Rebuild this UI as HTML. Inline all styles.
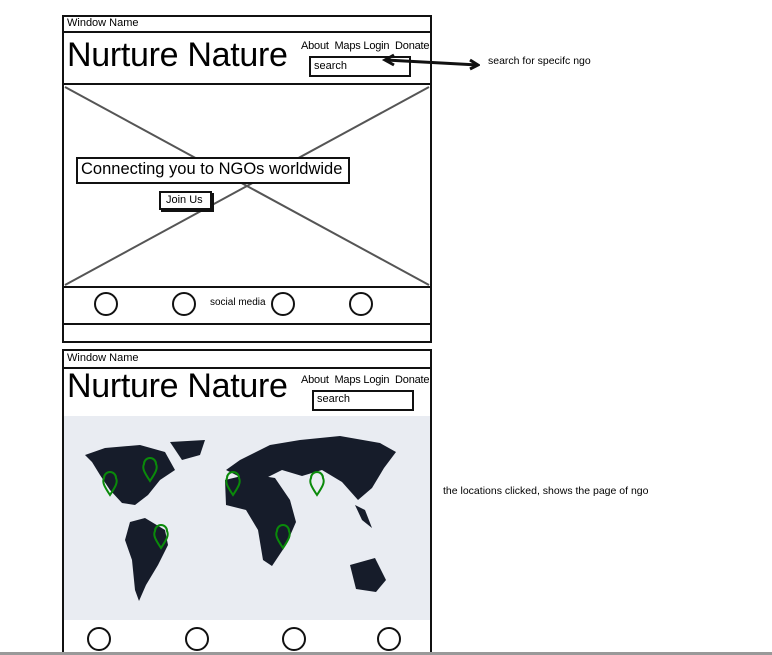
<!DOCTYPE html>
<html style="height:655px;overflow:hidden"><head><style>
body{margin:0;width:772px;height:655px;background:#fff;position:relative;overflow:hidden;font-family:"Liberation Sans",sans-serif;color:#000}
.a{position:absolute}
.box{position:absolute;border:2px solid #111;box-sizing:border-box}
.t{position:absolute;white-space:nowrap}
.c{position:absolute;width:24px;height:24px;border:2px solid #111;border-radius:50%;box-sizing:border-box;background:#fff}
</style></head><body>
<!-- frame 1 -->
<div class="box" style="left:62px;top:15px;width:370px;height:328px"></div>
<div class="a" style="left:62px;top:31px;width:370px;height:2px;background:#111"></div>
<div class="t" style="left:67px;top:17px;font-size:11px">Window Name</div>
<div class="a" style="left:62px;top:83px;width:370px;height:2px;background:#111"></div>
<div class="t" style="left:67px;top:36px;font-size:34px;letter-spacing:-0.3px">Nurture Nature</div>
<div class="t" style="left:301px;top:40px;font-size:11px;letter-spacing:-0.2px">About&nbsp; Maps Login&nbsp; Donate</div>
<div class="box" style="left:309px;top:56px;width:102px;height:21px;border-width:2px"></div>
<div class="t" style="left:314px;top:60px;font-size:11px">search</div>
<svg class="a" style="left:62px;top:84px" width="370" height="204"><line x1="3" y1="3" x2="367" y2="201" stroke="#555" stroke-width="2"/><line x1="367" y1="3" x2="3" y2="201" stroke="#555" stroke-width="2"/></svg>
<div class="box" style="left:76px;top:157px;width:274px;height:27px;background:#fff"></div>
<div class="t" style="left:81px;top:160px;font-size:16.5px">Connecting you to NGOs worldwide</div>
<div class="box" style="left:159px;top:191px;width:53px;height:19px;background:#fff;box-shadow:2px 2px 0 #111"></div>
<div class="t" style="left:166px;top:194px;font-size:11px">Join Us</div>
<div class="a" style="left:62px;top:286px;width:370px;height:2px;background:#111"></div>
<div class="t" style="left:210px;top:297px;font-size:10px">social media</div>
<div class="c" style="left:94px;top:292px"></div>
<div class="c" style="left:172px;top:292px"></div>
<div class="c" style="left:271px;top:292px"></div>
<div class="c" style="left:349px;top:292px"></div>
<div class="a" style="left:62px;top:323px;width:370px;height:2px;background:#111"></div>
<!-- arrow -->
<svg class="a" style="left:380px;top:52px" width="100" height="20"><line x1="6" y1="8" x2="98" y2="13" stroke="#111" stroke-width="3"/><polyline points="14,3 5,8 14,13" fill="none" stroke="#111" stroke-width="3"/><polyline points="90,8 98,13 90,17" fill="none" stroke="#111" stroke-width="3"/></svg>
<div class="t" style="left:488px;top:55px;font-size:10.5px">search for specifc ngo</div>
<!-- frame 2 -->
<div class="box" style="left:62px;top:349px;width:370px;height:310px"></div>
<div class="a" style="left:62px;top:367px;width:370px;height:2px;background:#111"></div>
<div class="t" style="left:67px;top:352px;font-size:11px">Window Name</div>
<div class="t" style="left:67px;top:367px;font-size:34px;letter-spacing:-0.3px">Nurture Nature</div>
<div class="t" style="left:301px;top:374px;font-size:11px;letter-spacing:-0.2px">About&nbsp; Maps Login&nbsp; Donate</div>
<div class="box" style="left:312px;top:390px;width:102px;height:21px"></div>
<div class="t" style="left:317px;top:393px;font-size:11px">search</div>
<svg class="a" style="left:64px;top:416px" width="366" height="204" viewBox="64 416 366 204">
<rect x="64" y="416" width="366" height="204" fill="#e9ecf2"/>
<g fill="#161c2a">
<polygon points="85,455 105,448 140,445 165,452 175,470 160,480 148,495 135,505 122,503 110,490 100,475 92,462"/>
<polygon points="170,442 205,440 200,455 182,460"/>
<polygon points="130,522 145,518 165,530 168,545 158,565 146,585 139,601 135,590 132,560 125,540"/>
<polygon points="250,455 270,445 300,440 340,436 380,443 396,452 384,468 372,488 358,500 342,482 322,470 302,476 282,470 262,480 242,478 226,470 240,460"/>
<polygon points="225,480 250,474 275,478 290,500 296,522 286,545 272,566 263,560 258,530 246,510 226,505"/>
<polygon points="350,565 375,558 386,580 376,592 356,589"/>
<polygon points="355,505 365,510 372,528 362,520"/>
</g>
<g fill="none" stroke="#0a8a0a" stroke-width="2">
<path d="M110 495 C104 486 102 482 104 478 A6 6 0 0 1 116 478 C118 482 116 486 110 495Z"/>
<path d="M150 481 C144 472 142 468 144 464 A6 6 0 0 1 156 464 C158 468 156 472 150 481Z"/>
<path d="M233 495 C227 486 225 482 227 478 A6 6 0 0 1 239 478 C241 482 239 486 233 495Z"/>
<path d="M317 495 C311 486 309 482 311 478 A6 6 0 0 1 323 478 C325 482 323 486 317 495Z"/>
<path d="M161 548 C155 539 153 535 155 531 A6 6 0 0 1 167 531 C169 535 167 539 161 548Z"/>
<path d="M283 548 C277 539 275 535 277 531 A6 6 0 0 1 289 531 C291 535 289 539 283 548Z"/>
</g>
</svg>
<div class="c" style="left:87px;top:627px"></div>
<div class="c" style="left:185px;top:627px"></div>
<div class="c" style="left:282px;top:627px"></div>
<div class="c" style="left:377px;top:627px"></div>
<div class="t" style="left:443px;top:485px;font-size:10.5px">the locations clicked, shows the page of ngo</div>
<div class="a" style="left:0;top:652px;width:772px;height:3px;background:#999"></div>
</body></html>
